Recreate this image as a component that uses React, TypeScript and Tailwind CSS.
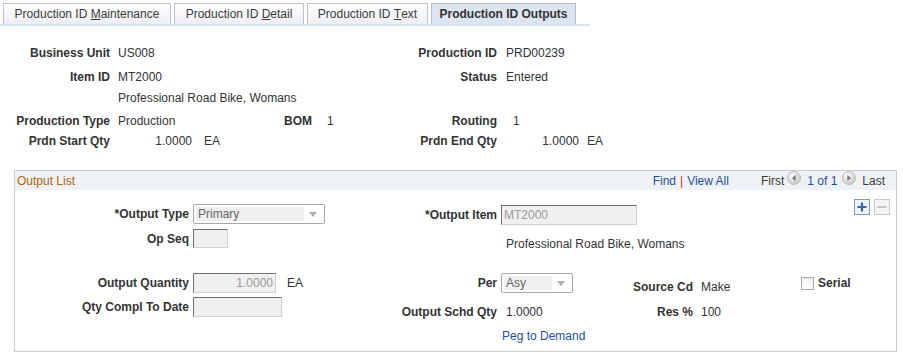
import React from "react";

const lbl = "flex justify-end whitespace-nowrap font-bold text-[#333]";

function Tab({ className, active, children }: { className: string; active?: boolean; children: React.ReactNode }) {
  return (
    <div
      className={`h-[21px] flex items-center justify-center border border-b-0 whitespace-nowrap ${
        active
          ? "bg-[#dce5f0] border-[#b4bfcc] font-bold text-[#333]"
          : "bg-linear-to-b from-white to-[#eceef1] border-[#bcc4ce] text-[#3a3a3a]"
      } ${className}`}
    >
      {children}
    </div>
  );
}

function DropArrow() {
  return (
    <svg width="8" height="5" viewBox="0 0 8 5">
      <path d="M0 0 L8 0 L4 5 Z" fill="#b0b0b0" />
    </svg>
  );
}

function Select({ className, value }: { className: string; value: string }) {
  return (
    <div className={`h-[20px] flex items-center border border-[#a7a7a7] rounded-[2px] bg-white p-[2px] ${className}`}>
      <div className="h-full flex-1 bg-[#efefef] flex items-center pl-[2px] text-[#666]">{value}</div>
      <div className="w-[18px] flex justify-center">
        <DropArrow />
      </div>
    </div>
  );
}

function Input({ className, value, right }: { className: string; value?: string; right?: boolean }) {
  return (
    <div
      className={`flex items-center bg-[#f0f0f0] border border-t-[#6f6f6f] border-l-[#6f6f6f] border-r-[#d0d0d0] border-b-[#d0d0d0] px-[2px] text-[#9a9a9a] ${
        right ? "justify-end" : ""
      } ${className}`}
    >
      {value}
    </div>
  );
}

function NavCircle({ dir }: { dir: "left" | "right" }) {
  const id = `nc-${dir}`;
  return (
    <svg width="14" height="14" viewBox="0 0 14 14" className="-mt-[6px]">
      <defs>
        <radialGradient id={id} cx="40%" cy="35%" r="70%">
          <stop offset="0" stopColor="#ffffff" />
          <stop offset="1" stopColor="#c2c2c2" />
        </radialGradient>
      </defs>
      <circle cx="7" cy="7" r="6.5" fill={`url(#${id})`} stroke="#bdbdbd" />
      {dir === "left" ? (
        <path d="M8.6 4 L5 7 L8.6 10 Z" fill="#707070" />
      ) : (
        <path d="M5.4 4 L9 7 L5.4 10 Z" fill="#707070" />
      )}
    </svg>
  );
}

function App() {
  return (
    <div className="w-[910px] h-[362px] bg-white text-[12px] leading-[14px] text-[#333] font-['Liberation_Sans',Arial,sans-serif]">
      {/* tabs */}
      <div className="flex gap-[3px] pl-[3px] pt-[3px] w-[590px] border-b-[2px] border-[#d9e3ef]">
        <Tab className="w-[168px]">
          Production ID&nbsp;<u>M</u>aintenance
        </Tab>
        <Tab className="w-[130px]">
          Production ID&nbsp;<u>D</u>etail
        </Tab>
        <Tab className="w-[121px]">
          Production ID&nbsp;<u>T</u>ext
        </Tab>
        <Tab className="w-[145px]" active>
          Production ID Outputs
        </Tab>
      </div>

      {/* header fields */}
      <div className="flex h-[14px] mt-[20px]">
        <div className={`${lbl} w-[110px]`}>Business Unit</div>
        <div className="ml-[8px] w-[267px]">US008</div>
        <div className={`${lbl} w-[112px]`}>Production ID</div>
        <div className="ml-[9px]">PRD00239</div>
      </div>
      <div className="flex h-[14px] mt-[10px]">
        <div className={`${lbl} w-[110px]`}>Item ID</div>
        <div className="ml-[8px] w-[267px]">MT2000</div>
        <div className={`${lbl} w-[112px]`}>Status</div>
        <div className="ml-[9px]">Entered</div>
      </div>
      <div className="flex h-[14px] mt-[7px]">
        <div className="ml-[118px]">Professional Road Bike, Womans</div>
      </div>
      <div className="flex h-[14px] mt-[9px]">
        <div className={`${lbl} w-[110px]`}>Production Type</div>
        <div className="ml-[8px] w-[90px]">Production</div>
        <div className={`${lbl} w-[104px]`}>BOM</div>
        <div className="ml-[15px] w-[58px]">1</div>
        <div className={`${lbl} w-[112px]`}>Routing</div>
        <div className="ml-[16px]">1</div>
      </div>
      <div className="flex h-[14px] mt-[6px]">
        <div className={`${lbl} w-[110px]`}>Prdn Start Qty</div>
        <div className="ml-[8px] w-[74px] text-right">1.0000</div>
        <div className="ml-[12px] w-[181px]">EA</div>
        <div className={`${lbl} w-[112px]`}>Prdn End Qty</div>
        <div className="ml-[9px] w-[73px] text-right">1.0000</div>
        <div className="ml-[8px]">EA</div>
      </div>

      {/* output list */}
      <div className="mt-[22px] ml-[14px] w-[883px] h-[182px] border border-[#c8ced6] flex flex-col">
        <div className="h-[19px] bg-[#eff2f4] flex items-center justify-between pl-[2px] pr-[11px]">
          <div className="text-[#b3620f]">Output List</div>
          <div className="flex items-center">
            <span className="text-[#1f4f9c]">Find</span>
            <span className="mx-[4px] text-[#d0312d]">|</span>
            <span className="text-[#1f4f9c]">View All</span>
            <span className="ml-[32px] text-[#3a3a3a]">First</span>
            <span className="ml-[3px] flex">
              <NavCircle dir="left" />
            </span>
            <span className="ml-[6px] text-[#1f4f9c]">1 of 1</span>
            <span className="ml-[5px] flex">
              <NavCircle dir="right" />
            </span>
            <span className="ml-[6px] text-[#3a3a3a]">Last</span>
          </div>
        </div>

        <div className="flex flex-1">
          {/* column 1 */}
          <div className="w-[386px] flex flex-col">
            <div className="mt-[14px] flex items-center h-[20px]">
              <div className={`${lbl} w-[174px]`}>*Output Type</div>
              <Select className="ml-[4px] w-[132px]" value="Primary" />
            </div>
            <div className="mt-[5px] flex items-center h-[19px]">
              <div className={`${lbl} w-[174px]`}>Op Seq</div>
              <Input className="ml-[4px] w-[35px] h-[19px]" />
            </div>
            <div className="mt-[25px] flex items-center h-[20px]">
              <div className={`${lbl} w-[174px]`}>Output Quantity</div>
              <Input className="ml-[4px] w-[83px] h-[20px]" value="1.0000" right />
              <div className="ml-[11px]">EA</div>
            </div>
            <div className="mt-[4px] flex items-center h-[20px]">
              <div className={`${lbl} w-[174px]`}>Qty Compl To Date</div>
              <Input className="ml-[4px] w-[89px] h-[20px]" />
            </div>
          </div>

          {/* column 2 */}
          <div className="w-[236px] flex flex-col">
            <div className="mt-[15px] flex items-center h-[20px]">
              <div className={`${lbl} w-[96px]`}>*Output Item</div>
              <Input className="ml-[4px] w-[136px] h-[20px]" value="MT2000" />
            </div>
            <div className="mt-[12px] h-[14px] pl-[105px] whitespace-nowrap">Professional Road Bike, Womans</div>
            <div className="mt-[22px] flex items-center h-[20px]">
              <div className={`${lbl} w-[96px]`}>Per</div>
              <Select className="ml-[4px] w-[72px]" value="Asy" />
            </div>
            <div className="mt-[12px] flex h-[14px]">
              <div className={`${lbl} w-[96px]`}>Output Schd Qty</div>
              <div className="ml-[9px]">1.0000</div>
            </div>
            <div className="mt-[10px] h-[14px] pl-[101px] text-[#1f4f9c] whitespace-nowrap">Peg to Demand</div>
          </div>

          {/* column 3 */}
          <div className="w-[164px] flex flex-col">
            <div className="mt-[90px] flex h-[14px]">
              <div className={`${lbl} w-[56px]`}>Source Cd</div>
              <div className="ml-[8px]">Make</div>
            </div>
            <div className="mt-[11px] flex h-[14px]">
              <div className={`${lbl} w-[56px]`}>Res %</div>
              <div className="ml-[8px]">100</div>
            </div>
          </div>

          {/* column 4 */}
          <div className="w-[53px] flex flex-col">
            <div className="mt-[86px] flex items-center h-[14px]">
              <div className="w-[13px] h-[13px] border border-[#a9a9a9] bg-linear-to-b from-[#f2f2f2] to-white" />
              <div className="ml-[4px] font-bold">Serial</div>
            </div>
          </div>

          {/* column 5 */}
          <div className="flex items-start gap-[4px] mt-[9px]">
            <svg width="16" height="16" viewBox="0 0 16 16">
              <rect x="0.5" y="0.5" width="15" height="15" fill="#eef3f8" stroke="#7f9bb8" />
              <path d="M8 3.5 V12.5 M3.5 8 H12.5" stroke="#2c69b0" strokeWidth="2.2" />
            </svg>
            <svg width="16" height="16" viewBox="0 0 16 16">
              <rect x="0.5" y="0.5" width="15" height="15" fill="#f4f4f4" stroke="#c9c9c9" />
              <path d="M3.5 8 H12.5" stroke="#c4c4c4" strokeWidth="2" />
            </svg>
          </div>
        </div>
      </div>
    </div>
  );
}

export default App;
